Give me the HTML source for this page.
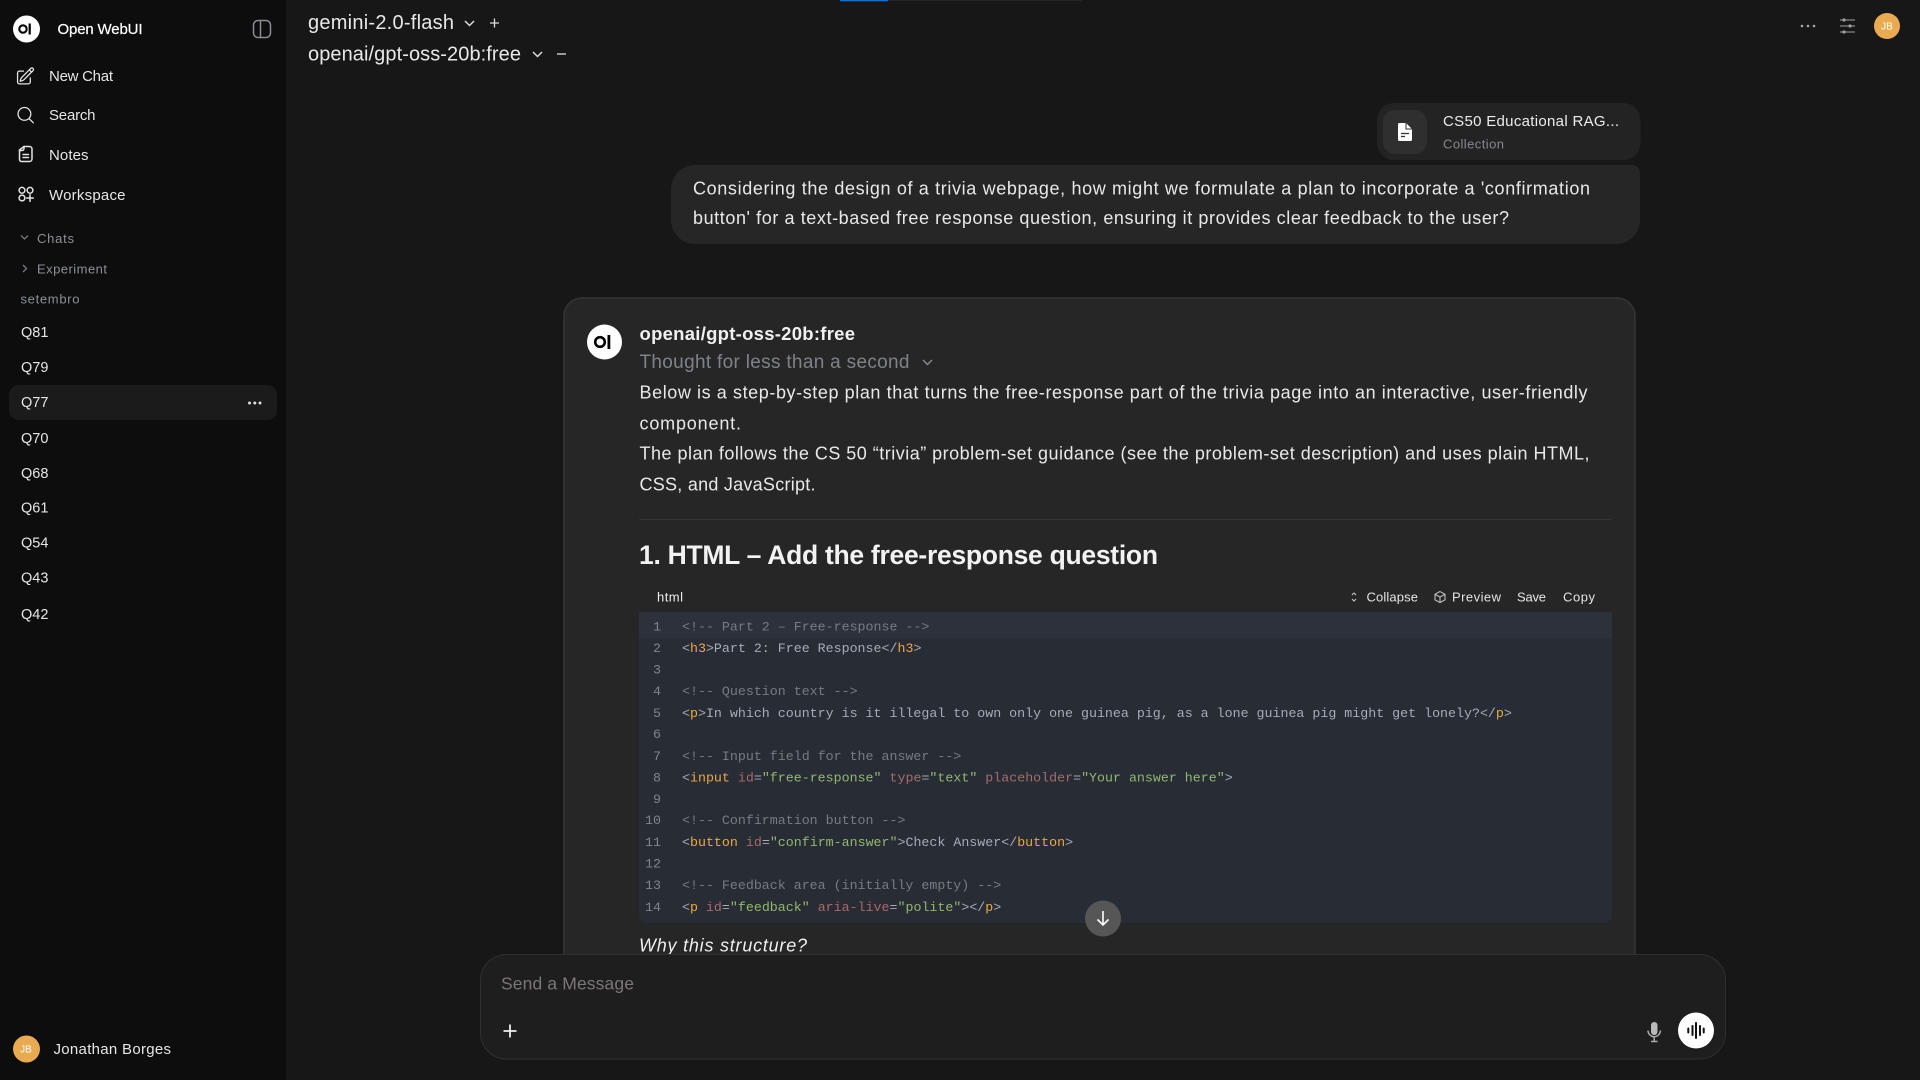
<!DOCTYPE html>
<html lang="en"><head><meta charset="utf-8"><title>Open WebUI</title>
<style>
html,body{margin:0;padding:0;background:#171717;width:1920px;height:1080px;overflow:hidden}
svg{display:block;font-family:"Liberation Sans",sans-serif}
.m{font-family:"Liberation Mono",monospace;font-size:13.3px;white-space:pre;fill:#a6abb5}
.c{fill:#767b84}.t{fill:#eba848}.a{fill:#a56b6b}.s{fill:#93b770}
.n{font-family:"Liberation Mono",monospace;font-size:13.3px;fill:#7f848d;text-anchor:end}
.side{font-size:15px;fill:#e6e6e6}
.q{font-size:14.5px;fill:#e6e6e6}
.body{font-size:18px;fill:#e8e8e8}
.ic{fill:none;stroke:#e3e3e3;stroke-width:1.5;stroke-linecap:round;stroke-linejoin:round}
</style></head><body>
<svg width="1920" height="1080" viewBox="0 0 1920 1080" xmlns="http://www.w3.org/2000/svg">
<rect width="1920" height="1080" fill="#171717"/>
<rect x="840" y="0" width="242" height="1" fill="#242424"/><rect x="840" y="0" width="48" height="1.2" fill="#0a74d4"/>

<!-- sidebar -->
<rect width="286" height="1080" fill="#0d0d0d"/>
<circle cx="26.5" cy="29" r="13.5" fill="#fff"/><circle cx="23" cy="29" r="3.7" fill="none" stroke="#000" stroke-width="2.1"/><rect x="28.6" y="23.5" width="2.2" height="11" fill="#000"/>
<text x="57.5" y="34" font-size="15" fill="#fff" stroke="#fff" stroke-width=".2" textLength="85">Open WebUI</text>
<g fill="none" stroke="#8a8d92" stroke-width="1.5"><rect x="253.5" y="20.5" width="17" height="17" rx="4.5"/><path d="M260.5 20.5v17"/></g>

<g class="ic" transform="translate(15,66) scale(.85)"><path d="m16.862 4.487 1.687-1.688a1.875 1.875 0 1 1 2.652 2.652L10.582 16.07a4.5 4.5 0 0 1-1.897 1.13L6 18l.8-2.685a4.5 4.5 0 0 1 1.13-1.897l8.932-8.931Zm0 0L19.5 7.125M18 14v4.75A2.25 2.25 0 0 1 15.75 21H5.25A2.25 2.25 0 0 1 3 18.75V8.25A2.25 2.25 0 0 1 5.25 6H10"/></g>
<text class="side" x="49" y="81" textLength="64">New Chat</text>
<g class="ic" transform="translate(15.5,105) scale(.85)"><path d="m21 21-5.197-5.197m0 0A7.5 7.5 0 1 0 5.196 5.196a7.5 7.5 0 0 0 10.607 10.607Z"/></g>
<text class="side" x="49" y="120" textLength="46.500">Search</text>
<g class="ic"><path d="M24 146.500h5.500a2.500 2.500 0 0 1 2.500 2.500v10a2.500 2.500 0 0 1-2.500 2.500h-8a2 2 0 0 1-2-2v-9.500Z"/><path d="M24 146.500v2a2 2 0 0 1-2 2h-2.500M23 154.500h5.500M23 157.500h5.500"/></g>
<text class="side" x="49" y="160" textLength="39.500">Notes</text>
<g class="ic" stroke-width="1.300"><circle cx="22" cy="190.300" r="2.900"/><circle cx="30" cy="190.300" r="2.900"/><circle cx="22" cy="198" r="2.900"/><path d="M30 194.800v6.600M26.700 198h6.600"/></g>
<text class="side" x="49" y="200" textLength="76.500">Workspace</text>

<path d="M21 235.500l3.500 3.500 3.500-3.500" fill="none" stroke="#75787e" stroke-width="1.300"/>
<text x="37" y="243" font-size="13" fill="#8d9096" textLength="37">Chats</text>
<path d="M23 265l3.500 3.500-3.500 3.500" fill="none" stroke="#75787e" stroke-width="1.300"/>
<text x="37" y="273.500" font-size="13" fill="#8d9096" textLength="70">Experiment</text>
<text x="20.500" y="303.500" font-size="13" fill="#8d9096" textLength="59">setembro</text>

<rect x="9" y="385" width="268" height="35" rx="10" fill="#1b1b1b"/>
<circle cx="249.500" cy="403" r="1.500" fill="#ddd"/><circle cx="254.800" cy="403" r="1.500" fill="#ddd"/><circle cx="260" cy="403" r="1.500" fill="#ddd"/>
<g class="q">
<text x="21" y="337">Q81</text><text x="21" y="372">Q79</text><text x="21" y="407">Q77</text><text x="21" y="443">Q70</text><text x="21" y="478">Q68</text><text x="21" y="512.500">Q61</text><text x="21" y="547.500">Q54</text><text x="21" y="582.500">Q43</text><text x="21" y="619">Q42</text>
</g>
<circle cx="26.500" cy="1049" r="13.500" fill="#e8ab52"/><text x="26" y="1052.500" font-size="10" fill="#fff" text-anchor="middle">JB</text>
<text class="side" x="53.500" y="1054" textLength="117.500">Jonathan Borges</text>

<!-- header -->
<text x="308" y="29" font-size="20" fill="#e8e8e8" textLength="146">gemini-2.0-flash</text>
<path d="M465 21l4.500 4.500 4.500-4.500" fill="none" stroke="#ddd" stroke-width="1.500"/>
<path d="M494.500 18.500v9M490 23h9" fill="none" stroke="#ddd" stroke-width="1.300"/>
<text x="308" y="60.500" font-size="20" fill="#e8e8e8" textLength="213">openai/gpt-oss-20b:free</text>
<path d="M533 52l4.500 4.500 4.500-4.500" fill="none" stroke="#ddd" stroke-width="1.500"/>
<path d="M557 54h9" fill="none" stroke="#ddd" stroke-width="1.300"/>
<circle cx="1802" cy="26" r="1.300" fill="#a8a8a8"/><circle cx="1808" cy="26" r="1.300" fill="#a8a8a8"/><circle cx="1814" cy="26" r="1.300" fill="#a8a8a8"/>
<g stroke="#a0a0a0" stroke-width="1" fill="#a0a0a0"><path d="M1840 20h15M1840 26h15M1840 32h15"/><circle cx="1844" cy="20" r="1.100"/><circle cx="1850" cy="26" r="1.100"/><circle cx="1844" cy="32" r="1.100"/></g>
<circle cx="1887" cy="26" r="13" fill="#e8ab52"/><text x="1887" y="29.500" font-size="10" fill="#fff" text-anchor="middle">JB</text>

<!-- user message -->
<rect x="1377" y="103" width="263.500" height="57" rx="17" fill="#232323"/>
<rect x="1383" y="110" width="44" height="44" rx="12" fill="#2f2f2f"/>
<path d="M1399.500 123h6.500l6 6v10.500a1.500 1.500 0 0 1-1.500 1.500h-11a1.500 1.500 0 0 1-1.500-1.500v-15a1.500 1.500 0 0 1 1.500-1.500Z" fill="#fff"/>
<path d="M1406 122.500v6.500h6.500" fill="none" stroke="#2f2f2f" stroke-width="1"/>
<path d="M1401 133.500h8M1401 136.500h4" stroke="#2f2f2f" stroke-width="1.300"/>
<text x="1443" y="126" font-size="15" fill="#ececec" textLength="176">CS50 Educational RAG...</text>
<text x="1443" y="148.500" font-size="13" fill="#85888e" textLength="61">Collection</text>

<path d="M695 165H1632a8 8 0 0 1 8 8V220a24 24 0 0 1-24 24H695a24 24 0 0 1-24-24V189a24 24 0 0 1 24-24Z" fill="#262626"/>
<text class="body" x="693" y="194.500" textLength="897">Considering the design of a trivia webpage, how might we formulate a plan to incorporate a 'confirmation</text>
<text class="body" x="693" y="224" textLength="816">button' for a text-based free response question, ensuring it provides clear feedback to the user?</text>

<!-- assistant card -->
<path d="M564 955V316a18 18 0 0 1 18-18H1617a18 18 0 0 1 18 18V955" fill="#262626" stroke="#353535" stroke-width="1.500"/>
<circle cx="604.500" cy="342" r="17.500" fill="#fff"/><circle cx="600" cy="342" r="4.800" fill="none" stroke="#000" stroke-width="2.600"/><rect x="607.500" y="335" width="2.800" height="14" fill="#000"/>
<text x="639.500" y="340" font-size="18.500" font-weight="700" fill="#f0f0f0" textLength="215.500">openai/gpt-oss-20b:free</text>
<text x="639.500" y="368" font-size="19" fill="#7f8289" textLength="270">Thought for less than a second</text>
<path d="M923 360l4.500 4.500 4.500-4.500" fill="none" stroke="#85888e" stroke-width="1.500"/>
<text class="body" x="639.500" y="398.500" textLength="948">Below is a step-by-step plan that turns the free-response part of the trivia page into an interactive, user-friendly</text>
<text class="body" x="639.500" y="429.500" textLength="101.500">component.</text>
<text class="body" x="639.500" y="459.500" textLength="950">The plan follows the CS 50 “trivia” problem-set guidance (see the problem-set description) and uses plain HTML,</text>
<text class="body" x="639.500" y="490.500" textLength="176">CSS, and JavaScript.</text>
<rect x="639" y="519" width="973" height="1" fill="#353535"/>
<text x="639" y="564" font-size="26.500" font-weight="700" fill="#f2f2f2" textLength="519">1. HTML – Add the free-response question</text>

<text x="657" y="601.500" font-size="13" fill="#eee" textLength="26">html</text>
<path d="M1352 595l2-2 2 2M1352 599l2 2 2-2" fill="none" stroke="#ccc" stroke-width="1"/>
<text x="1366.500" y="601.500" font-size="13" fill="#e4e4e4" textLength="51.500">Collapse</text>
<g fill="none" stroke="#ccc" stroke-width="1"><path d="M1440 591.500l5 2.800v5.500l-5 2.800-5-2.800v-5.500ZM1435 594.300l5 2.800 5-2.800M1440 597.100v5.500"/></g>
<text x="1452" y="601.500" font-size="13" fill="#e4e4e4" textLength="49">Preview</text>
<text x="1517" y="601.500" font-size="13" fill="#e4e4e4" textLength="29">Save</text>
<text x="1563" y="601.500" font-size="13" fill="#e4e4e4" textLength="32">Copy</text>

<path d="M639 612H1612V915a8 8 0 0 1-8 8H647a8 8 0 0 1-8-8Z" fill="#282c34"/>
<rect x="639" y="612" width="973" height="26" fill="#2c313c"/>
<g>
<text class="n" x="661" y="630.500">1</text><text class="n" x="661" y="652">2</text><text class="n" x="661" y="673.500">3</text><text class="n" x="661" y="695">4</text><text class="n" x="661" y="717">5</text><text class="n" x="661" y="738">6</text><text class="n" x="661" y="760">7</text><text class="n" x="661" y="781.500">8</text><text class="n" x="661" y="803">9</text><text class="n" x="661" y="824">10</text><text class="n" x="661" y="846">11</text><text class="n" x="661" y="867.500">12</text><text class="n" x="661" y="889">13</text><text class="n" x="661" y="911">14</text>
<text class="m c" x="682" y="630.500">&lt;!-- Part 2 – Free-response --&gt;</text>
<text class="m" x="682" y="652">&lt;<tspan class="t">h3</tspan>&gt;Part 2: Free Response&lt;/<tspan class="t">h3</tspan>&gt;</text>
<text class="m c" x="682" y="695">&lt;!-- Question text --&gt;</text>
<text class="m" x="682" y="717">&lt;<tspan class="t">p</tspan>&gt;In which country is it illegal to own only one guinea pig, as a lone guinea pig might get lonely?&lt;/<tspan class="t">p</tspan>&gt;</text>
<text class="m c" x="682" y="760">&lt;!-- Input field for the answer --&gt;</text>
<text class="m" x="682" y="781.500">&lt;<tspan class="t">input</tspan> <tspan class="a">id</tspan>=<tspan class="s">"free-response"</tspan> <tspan class="a">type</tspan>=<tspan class="s">"text"</tspan> <tspan class="a">placeholder</tspan>=<tspan class="s">"Your answer here"</tspan>&gt;</text>
<text class="m c" x="682" y="824">&lt;!-- Confirmation button --&gt;</text>
<text class="m" x="682" y="846">&lt;<tspan class="t">button</tspan> <tspan class="a">id</tspan>=<tspan class="s">"confirm-answer"</tspan>&gt;Check Answer&lt;/<tspan class="t">button</tspan>&gt;</text>
<text class="m c" x="682" y="889">&lt;!-- Feedback area (initially empty) --&gt;</text>
<text class="m" x="682" y="911">&lt;<tspan class="t">p</tspan> <tspan class="a">id</tspan>=<tspan class="s">"feedback"</tspan> <tspan class="a">aria-live</tspan>=<tspan class="s">"polite"</tspan>&gt;&lt;/<tspan class="t">p</tspan>&gt;</text>
</g>
<circle cx="1103" cy="918.500" r="18" fill="#565656"/><path d="M1103 911v14M1097.500 919.500l5.500 5.500 5.500-5.500" fill="none" stroke="#fff" stroke-width="1.600"/>
<text x="639" y="951.500" font-size="18" font-style="italic" fill="#eee" textLength="168">Why this structure?</text>

<!-- input -->
<rect x="480.500" y="954.500" width="1245" height="104.500" rx="26" fill="#1e1e1e" stroke="#303030"/>
<text x="501" y="989.500" font-size="17.500" fill="#7b7677" textLength="133">Send a Message</text>
<path d="M510 1024.500v13M503.500 1031h13" fill="none" stroke="#eee" stroke-width="1.800"/>
<rect x="1651" y="1022" width="6.500" height="13" rx="3.200" fill="#b8b8b8"/>
<path d="M1648 1030.500a6.200 6.200 0 0 0 12.400 0M1654.200 1037v4M1651 1041.500h6.500" fill="none" stroke="#aaa" stroke-width="1.500"/>
<circle cx="1696" cy="1030.500" r="18" fill="#fff"/>
<g stroke="#111" stroke-width="2" stroke-linecap="round"><path d="M1688.300 1028.500v4M1692.500 1026v9M1696 1023v15M1700 1026v9M1703.700 1028.500v4"/></g>
</svg>
</body></html>
